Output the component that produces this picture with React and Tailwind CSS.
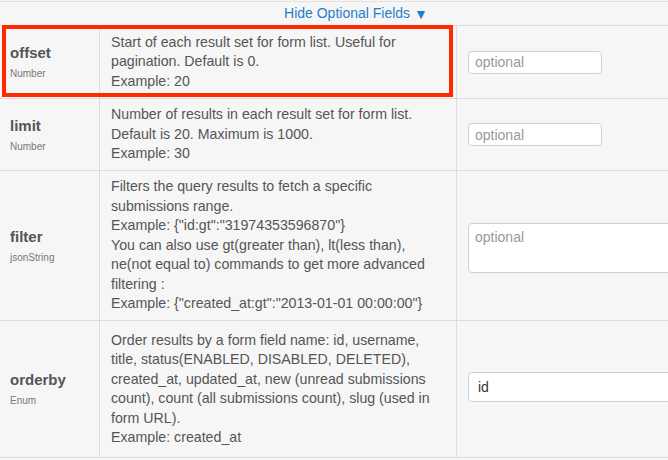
import React from 'react';

const rows = [
    {
        name: 'offset',
        type: 'Number',
        lines: ['Start of each result set for form list. Useful for', 'pagination. Default is 0.', 'Example: 20'],
        h: 'h-[73px]',
        input: 'small',
    },
    {
        name: 'limit',
        type: 'Number',
        lines: ['Number of results in each result set for form list.', 'Default is 20. Maximum is 1000.', 'Example: 30'],
        h: 'h-[72px]',
        input: 'small',
    },
    {
        name: 'filter',
        type: 'jsonString',
        lines: [
            'Filters the query results to fetch a specific',
            'submissions range.',
            'Example: {"id:gt":"31974353596870"}',
            'You can also use gt(greater than), lt(less than),',
            'ne(not equal to) commands to get more advanced',
            'filtering :',
            'Example: {"created_at:gt":"2013-01-01 00:00:00"}',
        ],
        h: 'h-[150px]',
        input: 'area',
    },
    {
        name: 'orderby',
        type: 'Enum',
        lines: [
            'Order results by a form field name: id, username,',
            'title, status(ENABLED, DISABLED, DELETED),',
            'created_at, updated_at, new (unread submissions',
            'count), count (all submissions count), slug (used in',
            'form URL).',
            'Example: created_at',
        ],
        h: 'h-[137px]',
        input: 'value',
    },
];

const App = () => {
    return (
        <div className="w-[668px] h-[460px] overflow-hidden bg-[#f6f6f7] font-['Liberation_Sans',Arial,sans-serif] text-[#555]">
            <div className="relative w-[712px] mt-px border-t border-[#e2e2e2]">
                {/* HEADER */}
                <div className="h-[24px] flex items-center justify-center border-b border-[#dcdcdc] text-[14px] text-[#1f7fc5]">
                    Hide Optional Fields <span className="ml-1 text-[14px] leading-none">▼</span>
                </div>

                {/* ROWS */}
                {rows.map((row) => (
                    <div key={row.name} className={`flex border-b border-[#dcdcdc] ${row.h}`}>
                        <div className="w-[100px] shrink-0 border-r border-[#dcdcdc] pl-[10px] flex flex-col justify-center">
                            <div className="text-[15px] font-bold leading-[18px]">{row.name}</div>
                            <div className="text-[10px] text-[#777] mt-[6px] leading-[12px]">{row.type}</div>
                        </div>
                        <div className="w-[357px] shrink-0 border-r border-[#dcdcdc] pl-[11px] flex flex-col justify-center text-[14.2px] leading-[19.5px] whitespace-nowrap">
                            {row.lines.map((line, i) => (
                                <div key={i}>{line}</div>
                            ))}
                        </div>
                        <div className="flex-1 pl-[11px] pr-[11px] flex items-center">
                            {row.input === 'small' && (
                                <input
                                    placeholder="optional"
                                    className="w-[134px] h-[23px] bg-white border border-[#cfcfcf] rounded-[4px] px-[6px] text-[14px] text-[#555] placeholder:text-[#999] outline-none"
                                />
                            )}
                            {row.input === 'area' && (
                                <textarea
                                    placeholder="optional"
                                    className="w-full h-[50px] mt-[5px] bg-white border border-[#cfcfcf] rounded-[4px] px-[6px] py-[3px] text-[14px] text-[#555] placeholder:text-[#999] outline-none resize-none"
                                />
                            )}
                            {row.input === 'value' && (
                                <input
                                    defaultValue="id"
                                    className="w-full h-[30px] -mt-[5px] bg-white border border-[#cfcfcf] rounded-[4px] px-[9px] text-[14px] text-[#333] outline-none"
                                />
                            )}
                        </div>
                    </div>
                ))}

                {/* HIGHLIGHT */}
                <div className="absolute left-[2px] top-[23px] w-[451px] h-[72px] border-4 border-[#ff2a00] pointer-events-none" />
            </div>
        </div>
    );
};

export default App;
